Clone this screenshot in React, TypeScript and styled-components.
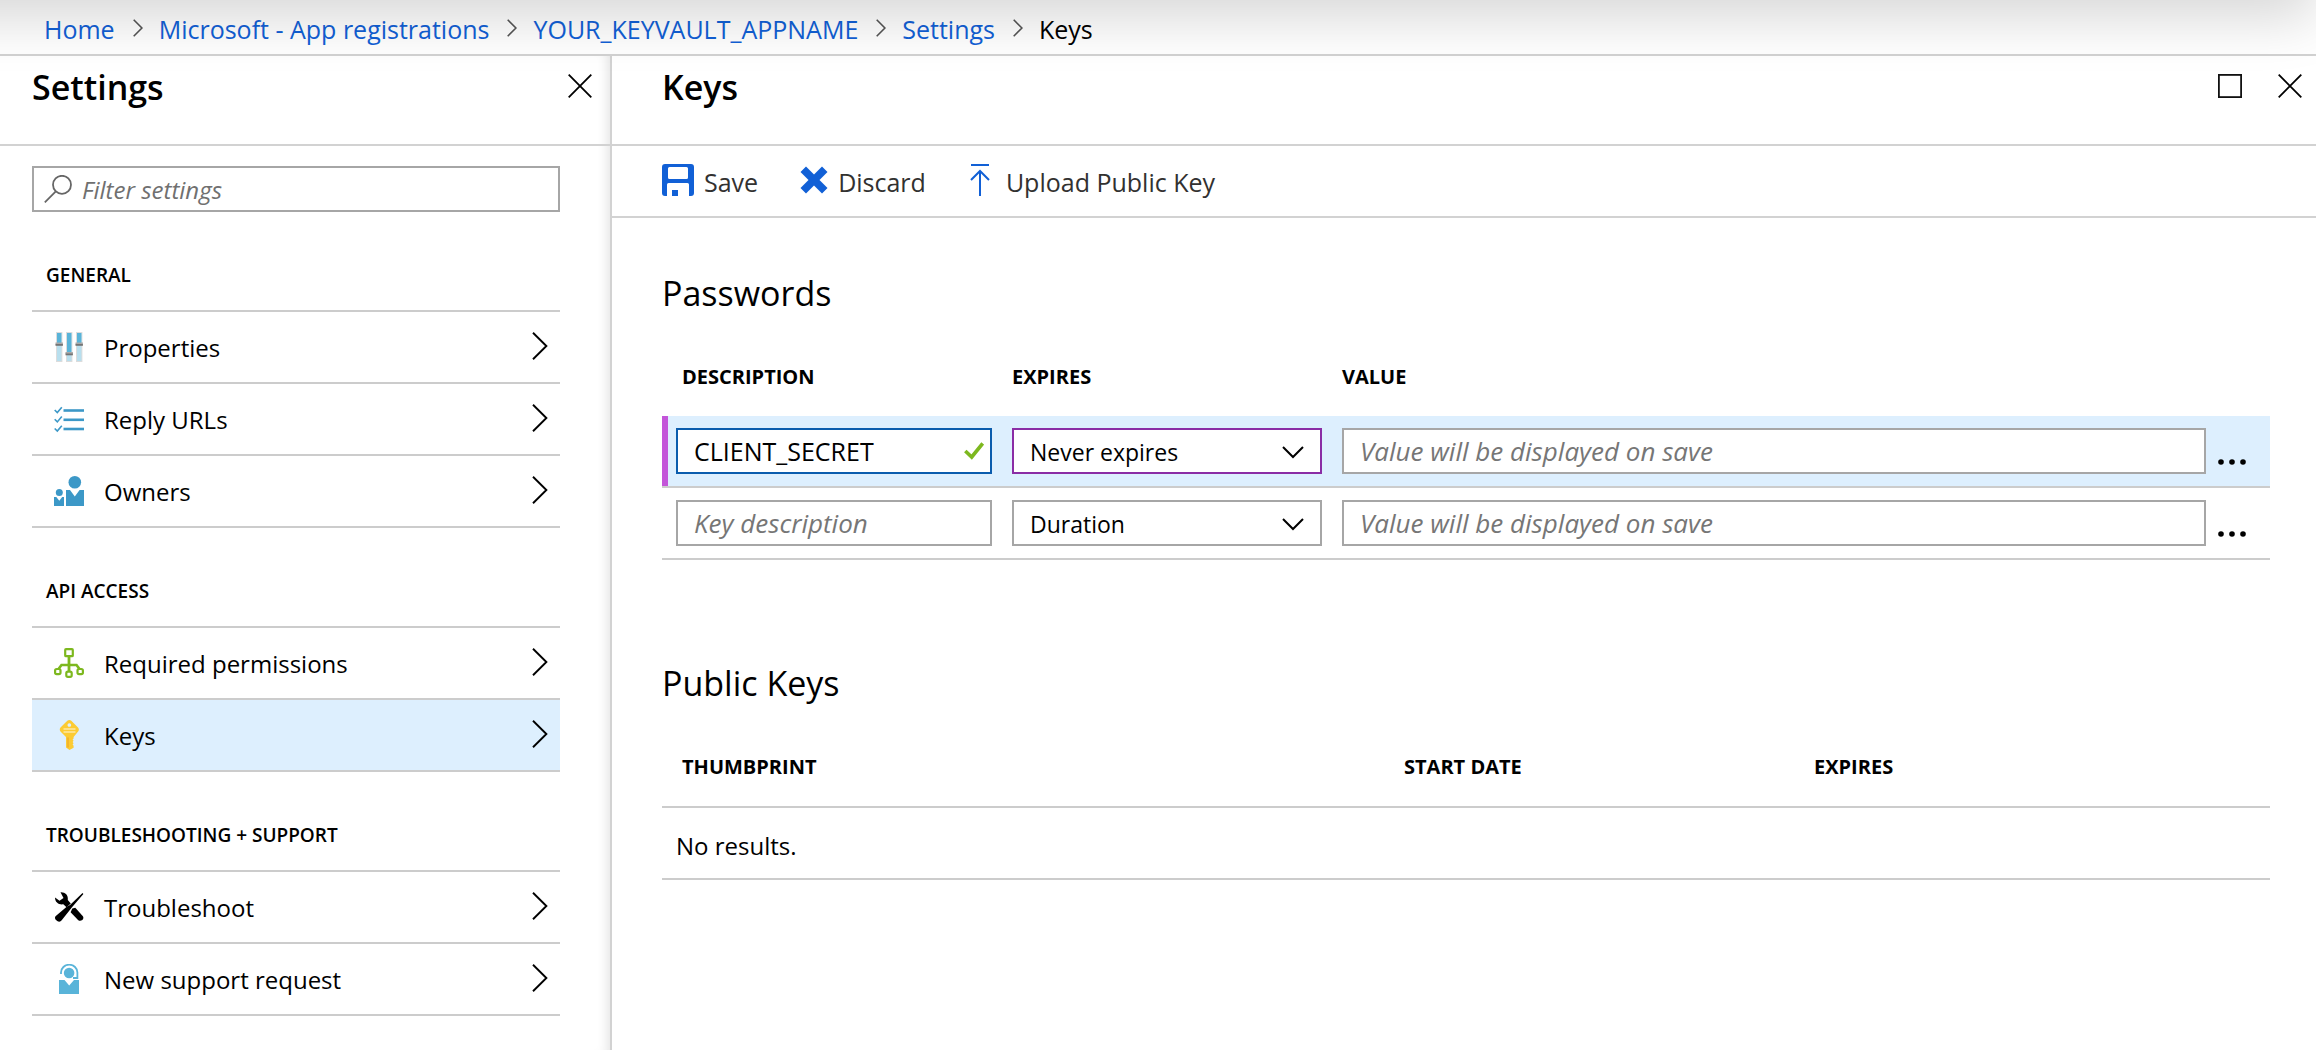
import React from "react";
import styled, { createGlobalStyle } from "styled-components";

const GlobalStyle = createGlobalStyle`
  *, *::before, *::after { box-sizing: border-box; }
  body {
    margin: 0;
    background: #fff;
    color: #000;
    font-family: "Open Sans", "Noto Sans", sans-serif;
    font-size: 25px;
    line-height: 34px;
    overflow: hidden;
  }
  button, input, select { font: inherit; color: inherit; }
  h1, h2, h3, ul, ol { margin: 0; padding: 0; }
  ul, ol { list-style: none; }
`;

const line = "#d2d2d2";
const rowLine = "#cccccc";
const selected = "#ddeffe";
const azure = "#1160d6";

const Page = styled.div`
  position: relative;
  display: flex;
  flex-direction: column;
  min-height: 100vh;
  overflow: hidden;
`;

const TopShadow = styled.div`
  position: absolute;
  z-index: 1;
  top: -100px;
  right: 0;
  left: -100px;
  height: 100px;
  box-shadow: 0 18px 56px rgba(0, 0, 0, 0.16);
  pointer-events: none;
`;

const BreadcrumbBar = styled.nav`
  height: 56px;
  padding: 12px 44px 0;
  border-bottom: 2px solid ${line};
`;

const Crumbs = styled.ol`
  display: flex;
  align-items: center;
  gap: 16px;
`;

const Crumb = styled.li`
  display: flex;
  align-items: center;
  gap: 18px;
`;

const CrumbLink = styled.a`
  color: ${azure};
  text-decoration: none;
`;

const Blades = styled.div`
  display: flex;
  flex: 1;
`;

const SettingsBlade = styled.aside`
  flex: none;
  width: 612px;
  border-right: 2px solid ${line};
  box-shadow: inset -12px 0 12px -10px rgba(0, 0, 0, 0.12);
`;

const KeysBlade = styled.main`
  flex: 1;
  min-width: 0;
`;

const BladeHeader = styled.header<{ $left: number; $right: number }>`
  display: flex;
  align-items: flex-start;
  justify-content: space-between;
  height: 90px;
  padding: 8px ${(p) => p.$right}px 0 ${(p) => p.$left}px;
  border-bottom: 2px solid ${line};
`;

const BladeTitle = styled.h1`
  font-size: 34px;
  font-weight: 600;
  line-height: 46px;
`;

const WindowButtons = styled.div`
  display: flex;
  gap: 36px;
  padding-top: 10px;
`;

const IconButton = styled.button`
  display: block;
  padding: 0;
  border: 0;
  background: none;
  line-height: 0;
  cursor: pointer;
`;

const SettingsBody = styled.div`
  padding: 20px 50px 0 32px;
`;

const SearchBox = styled.label`
  display: flex;
  align-items: center;
  gap: 10px;
  height: 46px;
  padding: 0 10px;
  border: 2px solid #a6a6a6;
`;

const SearchInput = styled.input`
  flex: 1;
  min-width: 0;
  padding: 2px 0 0;
  border: 0;
  outline: 0;
  background: none;
  font-size: 24px;
  &::placeholder { color: #707070; font-style: italic; opacity: 1; }
`;

const Group = styled.section`
  padding-top: 48px;
`;

const GroupTitle = styled.h2`
  height: 50px;
  padding-left: 14px;
  font-size: 19px;
  font-weight: 600;
  line-height: 30px;
`;

const Menu = styled.ul`
  border-top: 2px solid ${rowLine};
`;

const MenuItem = styled.li`
  border-bottom: 2px solid ${rowLine};
`;

const MenuLink = styled.a<{ $active?: boolean }>`
  display: flex;
  align-items: center;
  height: 70px;
  padding: 0 12px 0 22px;
  background: ${(p) => (p.$active ? selected : "transparent")};
  color: inherit;
  font-size: 24px;
  text-decoration: none;
`;

const MenuText = styled.span`
  flex: 1;
  padding: 2px 0 0 20px;
`;

const Toolbar = styled.div`
  display: flex;
  align-items: center;
  gap: 42px;
  height: 72px;
  padding: 0 50px 2px;
  border-bottom: 2px solid ${line};
`;

const ToolButton = styled.button`
  display: flex;
  align-items: center;
  gap: 10px;
  padding: 0;
  border: 0;
  background: none;
  color: #323130;
  line-height: 34px;
  cursor: pointer;
`;

const ToolText = styled.span`
  padding-top: 4px;
`;

const KeysBody = styled.div`
  padding: 52px 46px 0 50px;
`;

const SectionTitle = styled.h2`
  font-size: 34px;
  font-weight: 400;
  line-height: 46px;
`;

const Table = styled.table`
  width: 100%;
  margin-bottom: 100px;
  border-collapse: separate;
  border-spacing: 0;
  table-layout: fixed;
`;

const HeadCell = styled.th<{ $width?: number; $pad: number }>`
  width: ${(p) => (p.$width ? `${p.$width}px` : "auto")};
  height: 100px;
  padding: 46px 0 0 ${(p) => p.$pad}px;
  font-size: 20px;
  font-weight: 700;
  line-height: 30px;
  text-align: left;
  vertical-align: top;
`;

const Row = styled.tr<{ $active?: boolean }>`
  background: ${(p) => (p.$active ? selected : "transparent")};
  & > td:first-child {
    box-shadow: ${(p) => (p.$active ? "inset 6px 0 #c355d9" : "none")};
  }
`;

const Cell = styled.td<{ $first?: boolean }>`
  height: 72px;
  padding: 0 10px 0 ${(p) => (p.$first ? 14 : 10)}px;
  border-bottom: 2px solid ${rowLine};
`;

const EmptyCell = styled(Cell)`
  padding-top: 6px;
  font-size: 24px;
`;

const MoreCell = styled(Cell)`
  padding: 18px 0 0 2px;
`;

const Field = styled.div<{ $tone?: string }>`
  display: flex;
  align-items: center;
  height: 46px;
  border: 2px solid ${(p) => p.$tone ?? "#a6a6a6"};
  background: #fff;
`;

const TextInput = styled.input`
  flex: 1;
  width: 100%;
  min-width: 0;
  height: 42px;
  padding: 0 16px;
  border: 0;
  outline: 0;
  background: none;
  &::placeholder { color: #767676; font-size: 26px; font-style: italic; opacity: 1; }
`;

const CheckMark = styled.svg`
  flex: none;
  margin-right: 6px;
`;

const SelectField = styled(Field)`
  display: grid;
  grid-template-columns: 1fr 38px;
`;

const Select = styled.select`
  grid-area: 1 / 1 / 2 / 3;
  width: 100%;
  height: 42px;
  padding: 2px 40px 0 16px;
  border: 0;
  outline: 0;
  appearance: none;
  background: none;
  font-size: 23px;
`;

const SelectArrow = styled.svg`
  grid-area: 1 / 2 / 2 / 3;
  pointer-events: none;
`;

const LinedHeadCell = styled(HeadCell)`
  height: 102px;
  border-bottom: 2px solid ${rowLine};
`;

const CloseIcon = () => (
  <svg width="24" height="24" viewBox="0 0 24 24" fill="none" stroke="#000" strokeWidth="1.8">
    <path d="M.7.7 23.3 23.3M23.3.7.7 23.3" />
  </svg>
);

const MaximizeIcon = () => (
  <svg width="24" height="24" viewBox="0 0 24 24" fill="none" stroke="#111" strokeWidth="1.8">
    <rect x=".9" y=".9" width="22.2" height="22.2" />
  </svg>
);

const CrumbChevron = () => (
  <svg width="10" height="20" viewBox="0 0 10 20" fill="none" stroke="#555" strokeWidth="1.6">
    <path d="m.7.8 8.2 8.2-8.2 8.2" />
  </svg>
);

const RowChevron = () => (
  <svg width="16" height="30" viewBox="0 0 16 30" fill="none" stroke="#000" strokeWidth="1.9">
    <path d="M1 .8 14.4 14 1 27.2" />
  </svg>
);

const SearchIcon = () => (
  <svg width="28" height="28" viewBox="0 0 28 28" fill="none" stroke="#666" strokeWidth="1.8">
    <circle cx="18" cy="9.8" r="9" />
    <path d="M11.8 16.4.8 27.4" />
  </svg>
);

const SaveIcon = () => (
  <svg width="32" height="32" viewBox="0 0 32 32" fill={azure}>
    <path
      fillRule="evenodd"
      d="M3 0h26a3 3 0 0 1 3 3v26a3 3 0 0 1-3 3h-2V20.5a1.5 1.5 0 0 0-1.5-1.5h-19A1.5 1.5 0 0 0 5 20.5V32H3a3 3 0 0 1-3-3V3a3 3 0 0 1 3-3Zm4.500 3A1.5 1.5 0 0 0 6 4.500v9A1.500 1.500 0 0 0 7.500 15h17a1.500 1.500 0 0 0 1.500-1.500v-9A1.500 1.500 0 0 0 24.500 3Z"
    />
    <path d="M10 26h6v6h-6z" />
  </svg>
);

const DiscardIcon = () => (
  <svg width="28" height="28" viewBox="0 0 28 28" fill={azure}>
    <path d="M6 .5 14 8.500 22 .500 27.500 6 19.500 14 27.500 22 22 27.500 14 19.500 6 27.500.500 22 8.500 14 .500 6Z" />
  </svg>
);

const UploadIcon = () => (
  <svg width="28" height="32" viewBox="0 0 28 32" fill="none" stroke={azure} strokeWidth="2">
    <path d="M3 1h18M12 32V7M3 16l9-9 9 9" />
  </svg>
);

const CheckIcon = () => (
  <CheckMark width="20" height="18" viewBox="0 0 20 18" fill="none" stroke="#7db81f" strokeWidth="3.6">
    <path d="m1.300 9 6.400 6L18.700 1.500" />
  </CheckMark>
);

const MoreIcon = () => (
  <svg width="28" height="6" viewBox="0 0 28 6">
    <circle cx="3" cy="3" r="2.8" />
    <circle cx="14" cy="3" r="2.8" />
    <circle cx="25" cy="3" r="2.8" />
  </svg>
);

const PropertiesIcon = () => (
  <svg width="30" height="30" viewBox="0 0 30 30">
    {[2, 12, 22].map((x, i) => {
      const knob = i === 1 ? 20 : 10.5;
      return (
        <g key={x}>
          <rect x={x} width="6.4" height="30" fill="#dcdcdc" />
          <rect x={x + 1} y="1" width="4.4" height="28" fill="#b8dfee" />
          <rect x={x + 1} y="1" width="4.4" height={knob} fill="#59b4d9" />
          <rect x={x - 0.5} y={knob} width="7.4" height="2" fill="#a9a9a9" />
          <rect x={x - 0.5} y={knob + 1.5} width="7.4" height="1.8" fill="#747474" />
        </g>
      );
    })}
  </svg>
);

const ReplyIcon = () => (
  <svg width="30" height="30" viewBox="0 0 30 30" fill="none" stroke="#3c98c7">
    {[6.5, 15.8, 25].map((y) => (
      <g key={y}>
        <path d={`M9.5 ${y}H30`} strokeWidth="2.6" />
        <path d={`M.7 ${y - 0.5}l2.600 2.600L7.800 ${y - 3.2}`} strokeWidth="1.6" />
      </g>
    ))}
  </svg>
);

const OwnersIcon = () => (
  <svg width="30" height="30" viewBox="0 0 30 30" fill="#3c98c7">
    <circle cx="20.8" cy="6.3" r="6.3" />
    <path d="M12 14h4l4.800 6.500L25.600 14H30v16H12Z" />
    <circle cx="5.3" cy="16.5" r="3.5" />
    <path d="M0 21h2.300L5.300 24.700 8.200 21H10v9H0Z" />
  </svg>
);

const PermissionsIcon = () => (
  <svg width="30" height="30" viewBox="0 0 30 30" fill="none" stroke="#7db81f" strokeWidth="2.200">
    <rect x="11.2" y="1.2" width="7.6" height="7" rx=".8" />
    <path d="M15 8v15" strokeWidth="2.8" />
    <path d="M4.500 21 7.500 17h15l3 4" strokeWidth="2.600" />
    <rect x="1.1" y="21" width="5.4" height="5.2" rx="1.6" />
    <rect x="12.3" y="23.600" width="5.400" height="5.300" rx="1.600" />
    <rect x="23.5" y="21" width="5.400" height="5.200" rx="1.600" />
  </svg>
);

const KeyIcon = () => (
  <svg width="30" height="30" viewBox="0 0 30 30">
    <path
      fill="#fccb33"
      fillRule="evenodd"
      d="M13.300.8q2-1.500 4 0l6.700 6.700q1.400 1.700.5 3.500L19.600 17v1.500l-1 1 1 1.200-1 1.300 1 1.300-1 1.300 1 1.200v2L15.500 30 12 27.500V17L6.500 11.500Q5 9.500 6.500 7.500Zm2 2.400a1.800 1.800 0 1 0 .1 0Z"
    />
    <path stroke="#fde9a3" strokeWidth="1.4" d="M9.500 9h12M9.500 12h12" />
    <path stroke="#f2ae2a" strokeWidth="1.5" d="M14 17.500v10" />
  </svg>
);

const ToolsIcon = () => (
  <svg width="30" height="30" viewBox="0 0 30 30" fill="#000">
    <path d="M6.500.3C11 0 14.500 3 13.800 8l3 3.500-4.300 3.800-3.200-3C5 13 1 10.500 1 5.500l4.500 3.200 4-2.700Z" />
    <path d="m28.500 1 .9 1L18 15.200 7.700 28.300q-1.800 2.500-4.500.7-3.400-2-1.700-4.800L13 14.500 16 13Z" />
    <path d="m18.300 16.500 3-.8 7.600 8.500q1.200 2-.6 3.800-2 1.500-4 .3l-7.700-8Z" />
  </svg>
);

const SupportIcon = () => (
  <svg width="30" height="30" viewBox="0 0 30 30">
    <circle cx="15.1" cy="9" r="5.3" fill="#59b4d9" />
    <path fill="none" stroke="#59b4d9" strokeWidth="1.8" d="M7 10V8.500A8 7.600 0 0 1 23.400 8.500V14H19" />
    <path fill="#59b4d9" d="M5 16h5.500l4.700 5.500L20 16h5v14H5Z" />
  </svg>
);

type Entry = { label: string; icon: React.ReactNode; active?: boolean };

const groups: { title: string; items: Entry[] }[] = [
  {
    title: "GENERAL",
    items: [
      { label: "Properties", icon: <PropertiesIcon /> },
      { label: "Reply URLs", icon: <ReplyIcon /> },
      { label: "Owners", icon: <OwnersIcon /> },
    ],
  },
  {
    title: "API ACCESS",
    items: [
      { label: "Required permissions", icon: <PermissionsIcon /> },
      { label: "Keys", icon: <KeyIcon />, active: true },
    ],
  },
  {
    title: "TROUBLESHOOTING + SUPPORT",
    items: [
      { label: "Troubleshoot", icon: <ToolsIcon /> },
      { label: "New support request", icon: <SupportIcon /> },
    ],
  },
];

const crumbs = ["Home", "Microsoft - App registrations", "YOUR_KEYVAULT_APPNAME", "Settings"];

const passwords = [
  { description: "CLIENT_SECRET", expires: "Never expires", active: true },
  { description: "", expires: "Duration", active: false },
];

export default function App() {
  return (
    <Page>
      <GlobalStyle />
      <TopShadow />
      <BreadcrumbBar aria-label="Breadcrumb">
        <Crumbs>
          {crumbs.map((name) => (
            <Crumb key={name}>
              <CrumbLink href="#">{name}</CrumbLink>
              <CrumbChevron />
            </Crumb>
          ))}
          <Crumb aria-current="page">Keys</Crumb>
        </Crumbs>
      </BreadcrumbBar>
      <Blades>
        <SettingsBlade>
          <BladeHeader $left={32} $right={18}>
            <BladeTitle>Settings</BladeTitle>
            <WindowButtons>
              <IconButton aria-label="Close settings"><CloseIcon /></IconButton>
            </WindowButtons>
          </BladeHeader>
          <SettingsBody>
            <SearchBox>
              <SearchIcon />
              <SearchInput type="text" aria-label="Filter settings" placeholder="Filter settings" />
            </SearchBox>
            {groups.map((group) => (
              <Group key={group.title}>
                <GroupTitle>{group.title}</GroupTitle>
                <Menu>
                  {group.items.map((item) => (
                    <MenuItem key={item.label}>
                      <MenuLink href="#" $active={item.active}>
                        {item.icon}
                        <MenuText>{item.label}</MenuText>
                        <RowChevron />
                      </MenuLink>
                    </MenuItem>
                  ))}
                </Menu>
              </Group>
            ))}
          </SettingsBody>
        </SettingsBlade>
        <KeysBlade>
          <BladeHeader $left={50} $right={14}>
            <BladeTitle>Keys</BladeTitle>
            <WindowButtons>
              <IconButton aria-label="Maximize"><MaximizeIcon /></IconButton>
              <IconButton aria-label="Close keys"><CloseIcon /></IconButton>
            </WindowButtons>
          </BladeHeader>
          <Toolbar>
            <ToolButton><SaveIcon /><ToolText>Save</ToolText></ToolButton>
            <ToolButton><DiscardIcon /><ToolText>Discard</ToolText></ToolButton>
            <ToolButton><UploadIcon /><ToolText>Upload Public Key</ToolText></ToolButton>
          </Toolbar>
          <KeysBody>
            <SectionTitle>Passwords</SectionTitle>
            <Table>
              <thead>
                <tr>
                  <HeadCell $width={340} $pad={20}>DESCRIPTION</HeadCell>
                  <HeadCell $width={330} $pad={10}>EXPIRES</HeadCell>
                  <HeadCell $pad={10}>VALUE</HeadCell>
                  <HeadCell $width={54} $pad={0} aria-label="Actions" />
                </tr>
              </thead>
              <tbody>
                {passwords.map((row) => (
                  <Row key={row.expires} $active={row.active}>
                    <Cell $first>
                      <Field $tone={row.active ? "#0a5cad" : undefined}>
                        <TextInput type="text" aria-label="Key description" placeholder="Key description" defaultValue={row.description} />
                        {row.active && <CheckIcon />}
                      </Field>
                    </Cell>
                    <Cell>
                      <SelectField $tone={row.active ? "#8a2da5" : undefined}>
                        <Select aria-label="Expires" defaultValue={row.expires}>
                          <option>{row.expires}</option>
                        </Select>
                        <SelectArrow width="22" height="16" viewBox="0 0 22 16" fill="none" stroke="#000" strokeWidth="2">
                          <path d="m1 4 10 10L21 4" />
                        </SelectArrow>
                      </SelectField>
                    </Cell>
                    <Cell>
                      <Field>
                        <TextInput type="text" aria-label="Value" placeholder="Value will be displayed on save" readOnly />
                      </Field>
                    </Cell>
                    <MoreCell>
                      <IconButton aria-label="More actions"><MoreIcon /></IconButton>
                    </MoreCell>
                  </Row>
                ))}
              </tbody>
            </Table>
            <SectionTitle>Public Keys</SectionTitle>
            <Table>
              <thead>
                <tr>
                  <LinedHeadCell $pad={20}>THUMBPRINT</LinedHeadCell>
                  <LinedHeadCell $width={410} $pad={20}>START DATE</LinedHeadCell>
                  <LinedHeadCell $width={476} $pad={20}>EXPIRES</LinedHeadCell>
                </tr>
              </thead>
              <tbody>
                <Row>
                  <EmptyCell $first colSpan={3}>No results.</EmptyCell>
                </Row>
              </tbody>
            </Table>
          </KeysBody>
        </KeysBlade>
      </Blades>
    </Page>
  );
}
